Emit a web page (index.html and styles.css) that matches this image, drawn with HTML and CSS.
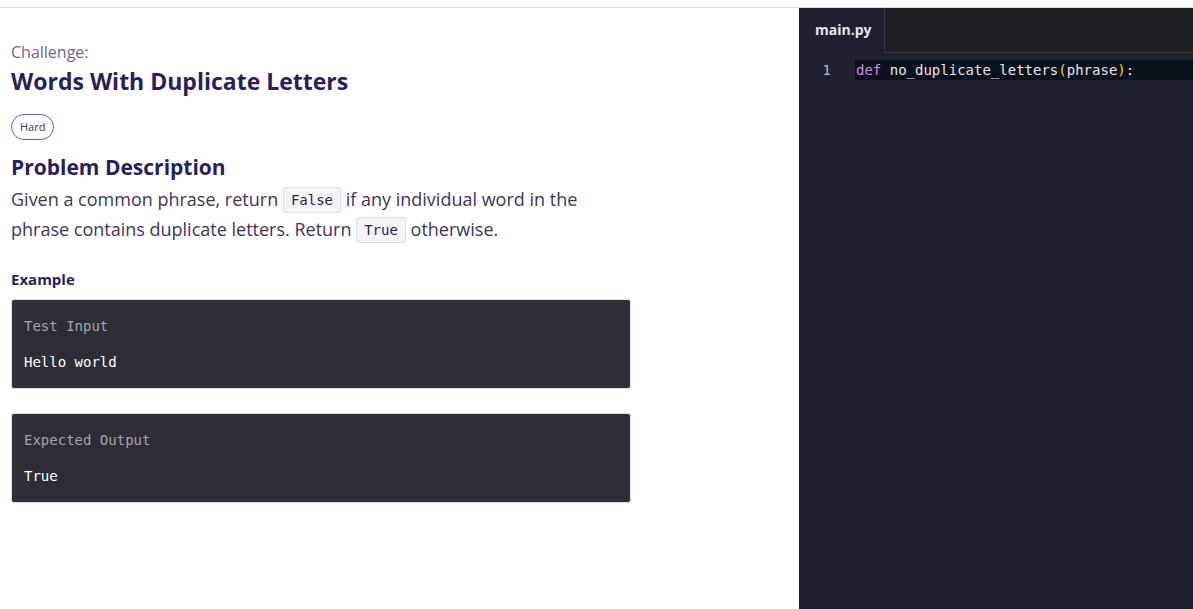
FILE: index.html
```html
<!DOCTYPE html>
<html>
<head>
<meta charset="utf-8">
<link rel="stylesheet" href="styles.css">
</head>
<body>
<div class="topbar"></div>
<div class="layout">
  <section class="left">
    <div class="kicker">Challenge:</div>
    <h1 class="title">Words With Duplicate Letters</h1>
    <span class="badge">Hard</span>
    <h2 class="subtitle">Problem Description</h2>
    <p class="desc">Given a common phrase, return <code class="ic">False</code> if any individual word in the phrase contains duplicate letters. Return <code class="ic">True</code> otherwise.</p>
    <h3 class="ex-title">Example</h3>
    <div class="box">
      <div class="box-label">Test Input</div>
      <div class="box-value">Hello world</div>
    </div>
    <div class="box">
      <div class="box-label">Expected Output</div>
      <div class="box-value">True</div>
    </div>
  </section>
  <section class="editor">
    <div class="tabs">
      <div class="tab">main.py</div>
      <div class="tab-fill"></div>
    </div>
    <div class="code">
      <div class="line">
        <span class="ln">1</span>
        <span class="src"><span class="kw">def</span> no_duplicate_letters<span class="paren">(</span>phrase<span class="paren">)</span>:</span>
      </div>
    </div>
  </section>
</div>
</body>
</html>
```
FILE: styles.css
```css
* { box-sizing: border-box; }
html, body { margin: 0; padding: 0; background: #fff; }
body { font-family: "Open Sans", "Noto Sans", sans-serif; height: 609px; overflow: hidden; }
.topbar { height: 8px; border-bottom: 1px solid #d9dde3; }
.layout { display: flex; height: 601px; }
.left { width: 799px; padding: 34px 0 0 11px; }
.kicker { font-size: 16px; font-weight: 500; color: #6e6889; line-height: 20px; }
.title { margin: 4px 0 0; font-size: 23px; font-weight: 700; color: #2a1e5c; line-height: 30px; }
.badge { display: inline-block; margin-top: 18px; border: 1px solid #5b57e6; border-radius: 13px; font-size: 11px; color: #3a3262; padding: 5px 8px; line-height: 14px; }
.subtitle { margin: 14px 0 0; font-size: 21px; font-weight: 700; color: #2a1e5c; line-height: 26px; }
.desc { margin: 4px 0 0; width: 620px; font-size: 18px; line-height: 30px; color: #3d3560; }
.ic { font-family: "DejaVu Sans Mono", monospace; font-size: 14px; line-height: 1; background: #f3f4f6; border: 1px solid #dcdfe5; border-radius: 3px; padding: 4px 7px; color: #2a1e5c; vertical-align: 1px; }
.ex-title { margin: 25px 0 0; font-size: 15px; font-weight: 700; color: #2a1e5c; line-height: 20px; }
.box { width: 620px; margin-top: 10px; background: #2e2f36; border: 1px solid #d9dde3; border-radius: 3px; padding: 17px 12px 17px; font-family: "DejaVu Sans Mono", monospace; font-size: 14px; line-height: 18px; }
.box + .box { margin-top: 24px; }
.box-label { color: #a3a3a8; }
.box-value { color: #ffffff; margin-top: 18px; }
.editor { flex: 1; background: #1f2130; display: flex; flex-direction: column; }
.tabs { display: flex; height: 45px; }
.tab { width: 85px; background: #1f2130; color: #e6e6ee; font-size: 14px; font-weight: 700; padding: 12px 0 0 16px; }
.tab-fill { flex: 1; background: #1e1f22; border-left: 1px solid #3a3b42; border-bottom: 1px solid #3a3b42; }
.code { padding-top: 7px; font-family: "DejaVu Sans Mono", monospace; font-size: 14px; }
.line { display: flex; height: 20px; line-height: 20px; }
.ln { width: 56px; text-align: right; padding-right: 24px; color: #b4b6c2; }
.src { flex: 1; background: #0a121b; color: #e8e8ee; padding-left: 1px; }
.kw { color: #c792ea; }
.paren { color: #ffd700; }
```
